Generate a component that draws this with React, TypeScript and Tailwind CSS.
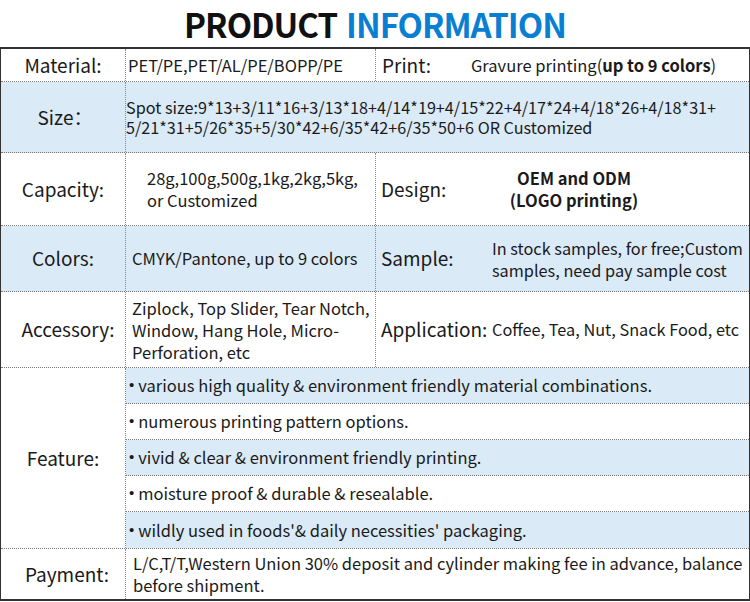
import React from "react";

const font = { fontFamily: '"Noto Sans CJK SC", "Noto Sans", sans-serif' };

const Label = ({ children, className = "" }: { children: React.ReactNode; className?: string }) => (
  <div className={`flex w-[124px] shrink-0 items-center justify-center text-[19px] ${className}`}>{children}</div>
);

const features = [
  "various high quality & environment friendly material combinations.",
  "numerous printing pattern options.",
  "vivid & clear & environment friendly printing.",
  "moisture proof & durable & resealable.",
  "wildly used in foods'& daily necessities' packaging.",
];

const App = () => {
  return (
    <div className="w-[750px] h-[602px] bg-white text-[#1a1a1a]" style={font}>
      <h1 className="flex h-[47px] items-center justify-center gap-[9px] text-[33px] font-bold leading-[44px] tracking-[-1px]">
        <span className="text-[#111]">PRODUCT</span>
        <span className="text-[#0a7fd1]">INFORMATION</span>
      </h1>

      <div className="border-2 border-[#333] border-l-[1.5px] border-r-[1.5px] whitespace-nowrap">
        {/* material / print */}
        <div className="flex h-[33px] border-b border-dotted border-[#777]">
          <Label>Material:</Label>
          <div className="flex w-[250px] items-center border-l border-dotted border-[#888] pl-[2px] text-[16.5px]">
            PET/PE,PET/AL/PE/BOPP/PE
          </div>
          <div className="flex flex-1 items-center border-l border-dotted border-[#888] text-[16.5px]">
            <span className="ml-[6px] w-[89px] text-[19px]">Print:</span>
            <span>
              Gravure printing(<b>up to 9 colors</b>)
            </span>
          </div>
        </div>

        {/* size */}
        <div className="flex h-[71px] border-b border-dotted border-[#777] bg-[#daeaf7]">
          <Label className="pl-[4px]">Size：</Label>
          <div className="flex flex-1 items-center border-l border-dotted border-[#888] text-[16.2px] leading-[20px]">
            <p>
              Spot size:9*13+3/11*16+3/13*18+4/14*19+4/15*22+4/17*24+4/18*26+4/18*31+
              <br />
              5/21*31+5/26*35+5/30*42+6/35*42+6/35*50+6 OR Customized
            </p>
          </div>
        </div>

        {/* capacity / design */}
        <div className="flex h-[73px] border-b border-dotted border-[#777]">
          <Label>Capacity:</Label>
          <div className="flex w-[250px] items-center border-l border-dotted border-[#888] pl-[21px] text-[16.5px] leading-[22px]">
            <p>
              28g,100g,500g,1kg,2kg,5kg,
              <br />
              or Customized
            </p>
          </div>
          <div className="flex flex-1 items-center border-l border-dotted border-[#888]">
            <span className="ml-[5px] w-[110px] text-[19px]">Design:</span>
            <p className="w-[166px] text-center text-[16.5px] font-bold leading-[22px]">
              OEM and ODM
              <br />
              (LOGO printing)
            </p>
          </div>
        </div>

        {/* colors / sample */}
        <div className="flex h-[66px] border-b border-dotted border-[#777] bg-[#daeaf7]">
          <Label>Colors:</Label>
          <div className="flex w-[250px] items-center border-l border-dotted border-[#888] pl-[6px] text-[16.5px]">
            CMYK/Pantone, up to 9 colors
          </div>
          <div className="flex flex-1 items-center border-l border-dotted border-[#888]">
            <span className="ml-[5px] w-[111px] text-[19px]">Sample:</span>
            <p className="text-[16.3px] leading-[22px]">
              In stock samples, for free;Custom
              <br />
              samples, need pay sample cost
            </p>
          </div>
        </div>

        {/* accessory / application */}
        <div className="flex h-[76px] border-b border-dotted border-[#777]">
          <Label className="pl-[10px]">Accessory:</Label>
          <div className="flex w-[250px] items-center border-l border-dotted border-[#888] pl-[6px] text-[16.5px] leading-[22px]">
            <p>
              Ziplock, Top Slider, Tear Notch,
              <br />
              Window, Hang Hole, Micro-
              <br />
              Perforation, etc
            </p>
          </div>
          <div className="flex flex-1 items-center border-l border-dotted border-[#888]">
            <span className="ml-[5px] w-[111px] text-[19px]">Application:</span>
            <span className="text-[16.3px]">Coffee, Tea, Nut, Snack Food, etc</span>
          </div>
        </div>

        {/* feature */}
        <div className="flex border-b border-dotted border-[#777]">
          <Label>Feature:</Label>
          <div className="flex flex-1 flex-col border-l border-dotted border-[#888]">
            {features.map((f, i) => (
              <div
                key={f}
                className={`flex h-[36px] items-center pl-[3px] text-[16.5px] ${i % 2 === 0 ? "bg-[#daeaf7]" : ""} ${
                  i < features.length - 1 ? "border-b border-dotted border-[#777]" : ""
                }`}
              >
                <span className="mr-[4px] text-[15px]" style={{ fontFamily: '"Liberation Sans", sans-serif' }}>
                  •
                </span>
                {f}
              </div>
            ))}
          </div>
        </div>

        {/* payment */}
        <div className="flex h-[50px]">
          <Label className="pl-[8px]">Payment:</Label>
          <div className="flex flex-1 items-center border-l border-dotted border-[#888] pl-[7px] text-[16.5px] leading-[22px]">
            <p>
              L/C,T/T,Western Union 30% deposit and cylinder making fee in advance, balance
              <br />
              before shipment.
            </p>
          </div>
        </div>
      </div>
    </div>
  );
};

export default App;
